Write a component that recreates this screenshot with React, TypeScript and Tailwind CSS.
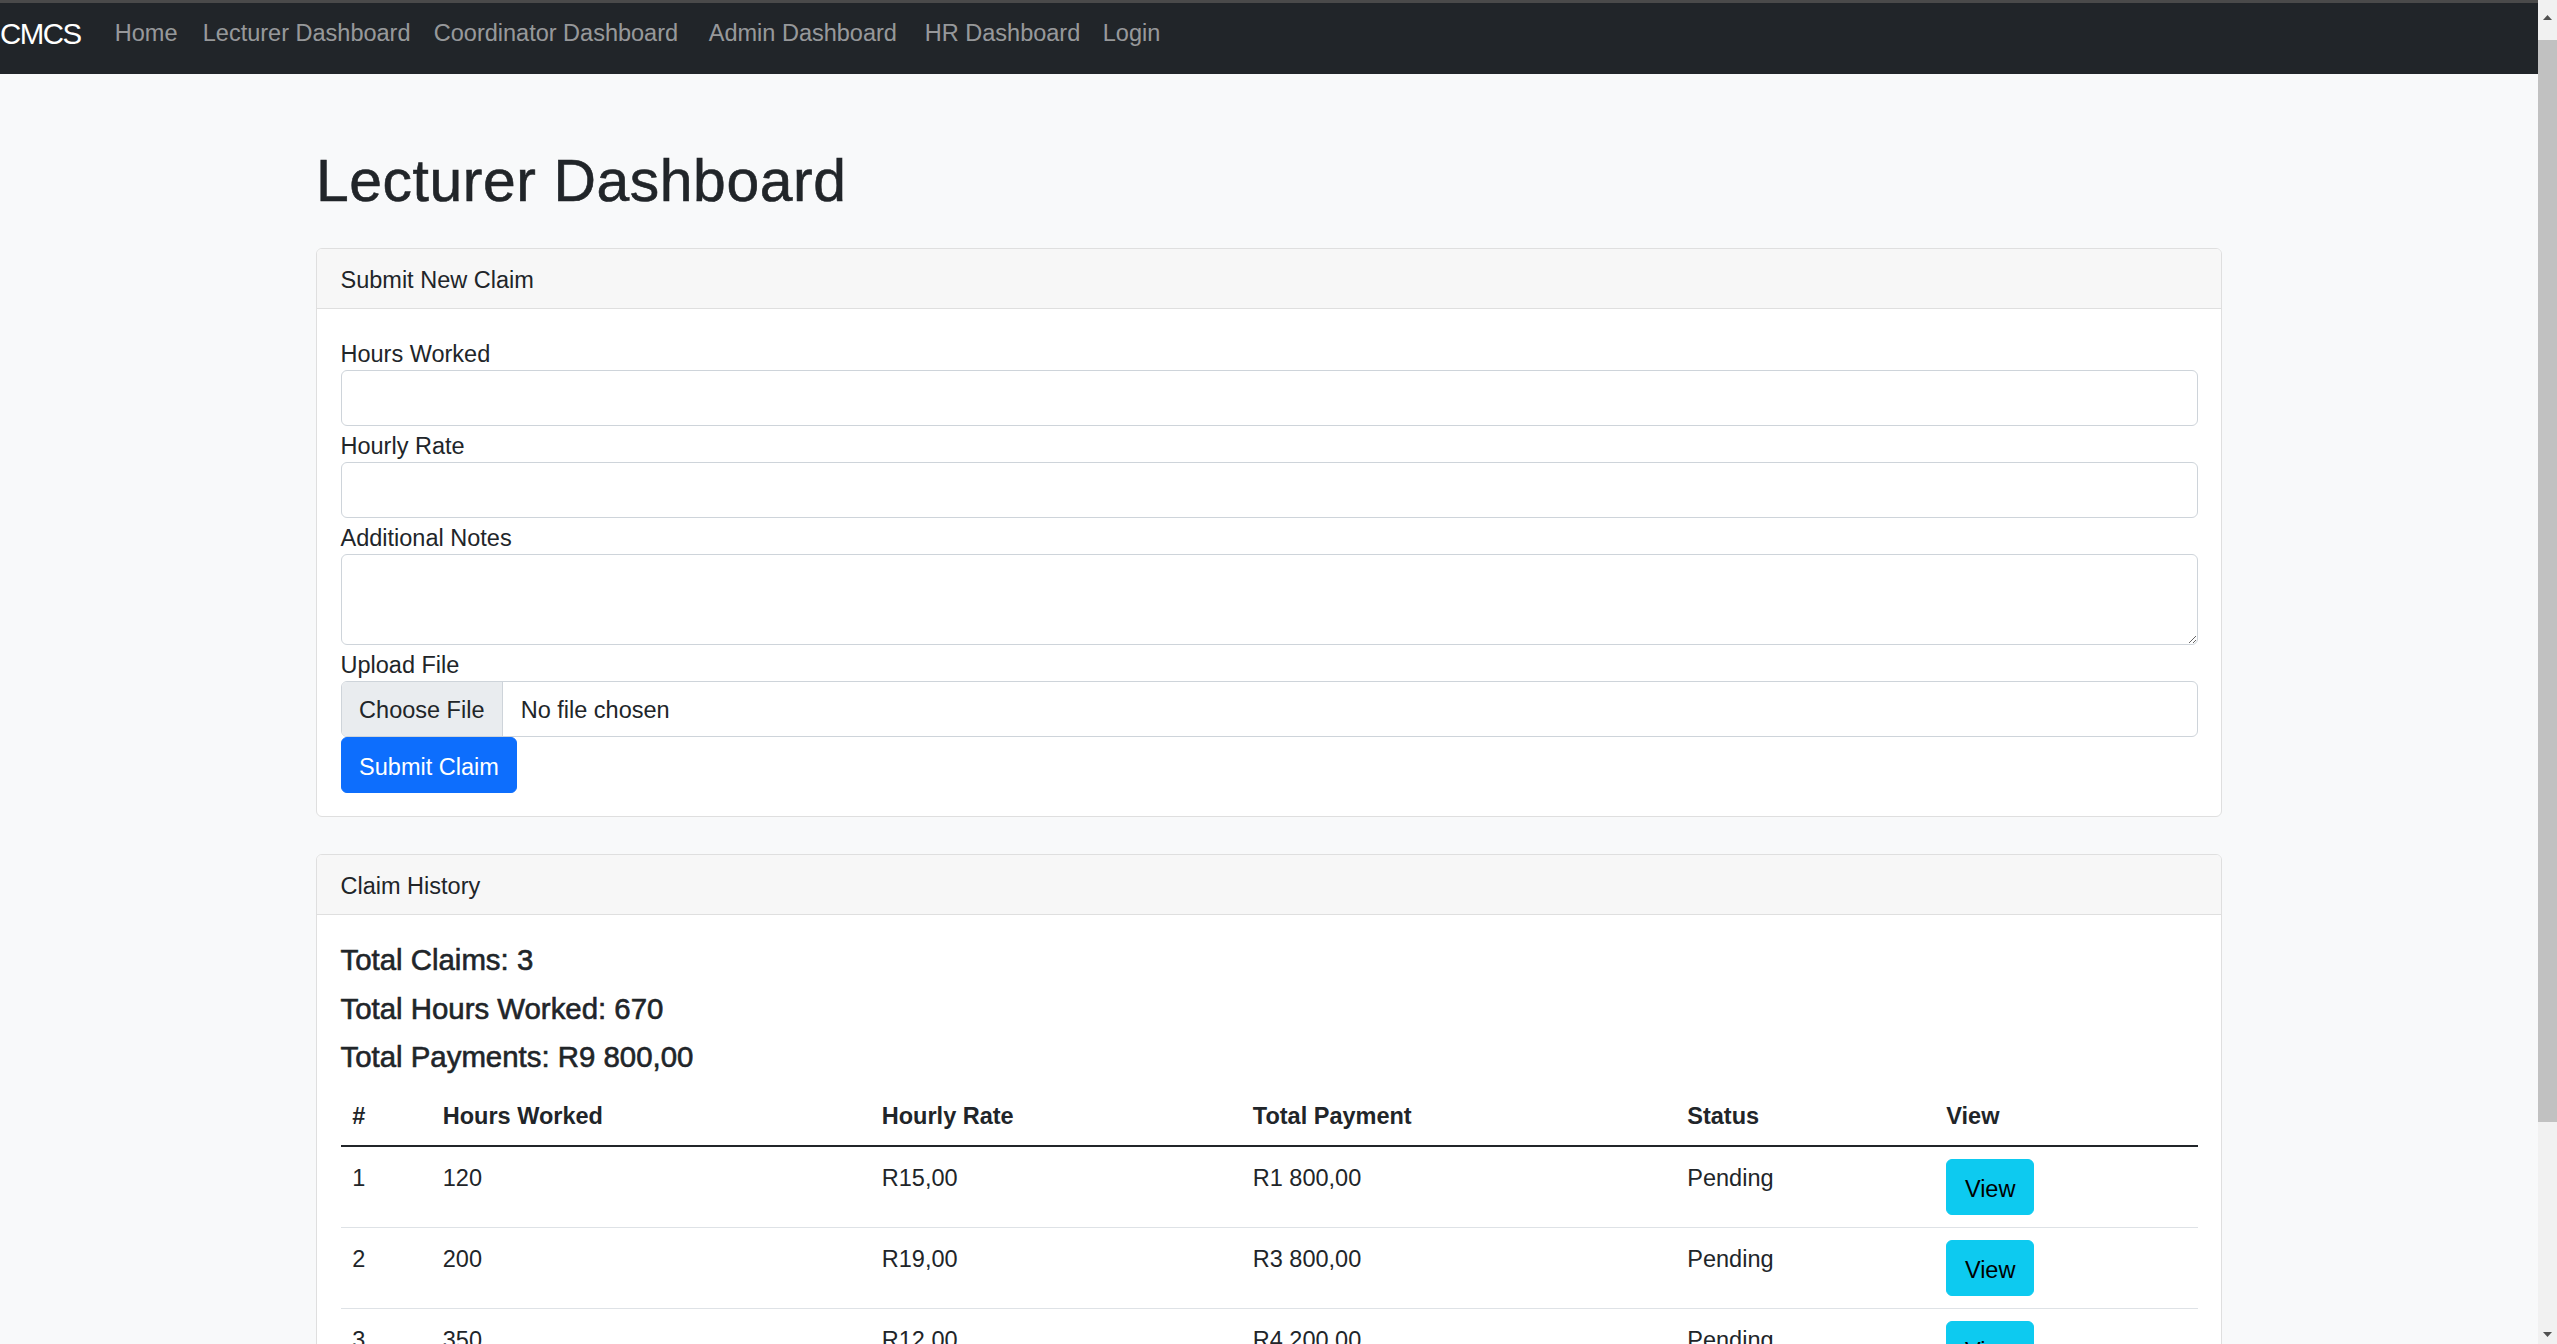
import React from "react";

const navLinks = [
  { label: "Home", width: "w-[88px]" },
  { label: "Lecturer Dashboard", width: "w-[231px]" },
  { label: "Coordinator Dashboard", width: "w-[275px]" },
  { label: "Admin Dashboard", width: "w-[216px]" },
  { label: "HR Dashboard", width: "w-[178px]" },
  { label: "Login", width: "" },
];

const claims = [
  { id: 1, hours: 120, rate: "R15,00", total: "R1 800,00", status: "Pending" },
  { id: 2, hours: 200, rate: "R19,00", total: "R3 800,00", status: "Pending" },
  { id: 3, hours: 350, rate: "R12,00", total: "R4 200,00", status: "Pending" },
];

function Label({ children }: { children: React.ReactNode }) {
  return <label className="block pt-[4px] leading-[32px]">{children}</label>;
}

function Card({ title, children, bodyClass }: { title: string; children: React.ReactNode; bodyClass: string }) {
  return (
    <div className="rounded-[6px] border border-[#dfdfdf] bg-white">
      <div className="rounded-t-[5px] border-b border-[#dfdfdf] bg-[#f7f7f7] px-[23.5px] pt-[14px] pb-[9.7px] leading-[35.3px]">
        {title}
      </div>
      <div className={bodyClass}>{children}</div>
    </div>
  );
}

function Scrollbar() {
  return (
    <div className="flex w-[19px] shrink-0 flex-col bg-[#f1f1f1]">
      <div className="flex h-[34px] items-center justify-center">
        <svg width="9" height="5" viewBox="0 0 9 5">
          <path d="M4.5 0 L9 5 L0 5 Z" fill="#505050" />
        </svg>
      </div>
      <div className="mt-[6px] h-[1082px] bg-[#c1c1c1]" />
      <div className="flex-1" />
      <div className="flex h-[20px] items-center justify-center">
        <svg width="9" height="5" viewBox="0 0 9 5">
          <path d="M0 0 L9 0 L4.5 5 Z" fill="#505050" />
        </svg>
      </div>
    </div>
  );
}

export default function App() {
  return (
    <div className="flex h-[1344px] w-full overflow-hidden bg-[#f8f9fa] font-['Liberation_Sans',Arial,sans-serif] text-[23.5px] leading-[35.3px] text-[#212529]">
      <div className="flex min-w-0 flex-1 flex-col">
        <div className="h-[3px] shrink-0 bg-[#4a4a4a]" />
        <nav className="flex h-[71px] shrink-0 items-center whitespace-nowrap bg-[#212529] pb-[9px]">
          <a href="#" className="w-[103px] shrink-0 text-[29.4px] leading-[44px] tracking-[-1.5px] text-white">
            CMCS
          </a>
          {navLinks.map((link) => (
            <a key={link.label} href="#" className={`${link.width} shrink-0 whitespace-nowrap px-[11.8px] text-[rgba(255,255,255,0.55)]`}>
              {link.label}
            </a>
          ))}
        </nav>

        <main className="mx-auto w-[1906px] shrink-0 pt-[72px]">
          <h1 className="mb-[31.4px] text-[58.8px] leading-[70.5px] font-medium tracking-[0.6px] [-webkit-text-stroke:0.6px_#212529]">
            Lecturer Dashboard
          </h1>

          <Card title="Submit New Claim" bodyClass="px-[23.5px] pt-[25px] pb-[23.5px]">
            <form>
              <Label>Hours Worked</Label>
              <input type="text" className="block h-[56px] w-full rounded-[6px] border border-[#ced4da] bg-white px-[17.6px] outline-none" />
              <Label>Hourly Rate</Label>
              <input type="text" className="block h-[56px] w-full rounded-[6px] border border-[#ced4da] bg-white px-[17.6px] outline-none" />
              <Label>Additional Notes</Label>
              <textarea className="block h-[91px] w-full resize-y rounded-[6px] border border-[#ced4da] bg-white px-[17.6px] outline-none" />
              <Label>Upload File</Label>
              <div className="flex h-[56px] w-full overflow-hidden rounded-[6px] border border-[#ced4da] bg-white">
                <div className="flex items-center border-r border-[#ced4da] bg-[#e9ecef] px-[17.6px] pt-[3px]">Choose File</div>
                <div className="flex items-center pl-[17.6px] pt-[3px]">No file chosen</div>
              </div>
              <button
                type="button"
                className="flex h-[56px] items-center rounded-[6px] border border-[#0d6efd] bg-[#0d6efd] px-[17.6px] pt-[5px] text-white"
              >
                Submit Claim
              </button>
            </form>
          </Card>

          <div className="mt-[37px]">
            <Card title="Claim History" bodyClass="px-[23.5px] pt-[27px] pb-[23.5px]">
              <h5 className="mb-[12.3px] text-[29.4px] leading-[36px] font-medium [-webkit-text-stroke:0.6px_#212529]">Total Claims: 3</h5>
              <h5 className="mb-[12.3px] text-[29.4px] leading-[36px] font-medium [-webkit-text-stroke:0.6px_#212529]">Total Hours Worked: 670</h5>
              <h5 className="mb-[12.3px] text-[29.4px] leading-[36px] font-medium [-webkit-text-stroke:0.6px_#212529]">Total Payments: R9 800,00</h5>

              <table className="w-full table-fixed border-separate border-spacing-0">
                <thead>
                  <tr>
                    <th className="w-[90.5px] border-b-2 border-[#212529] px-[11.8px] pt-[11.8px] pb-[10.4px] text-left align-bottom font-bold leading-[35.3px]">#</th>
                    <th className="w-[439px] border-b-2 border-[#212529] px-[11.8px] pt-[11.8px] pb-[10.4px] text-left align-bottom font-bold leading-[35.3px]">Hours Worked</th>
                    <th className="w-[371px] border-b-2 border-[#212529] px-[11.8px] pt-[11.8px] pb-[10.4px] text-left align-bottom font-bold leading-[35.3px]">Hourly Rate</th>
                    <th className="w-[434.5px] border-b-2 border-[#212529] px-[11.8px] pt-[11.8px] pb-[10.4px] text-left align-bottom font-bold leading-[35.3px]">Total Payment</th>
                    <th className="w-[259px] border-b-2 border-[#212529] px-[11.8px] pt-[11.8px] pb-[10.4px] text-left align-bottom font-bold leading-[35.3px]">Status</th>
                    <th className="border-b-2 border-[#212529] px-[11.8px] pt-[11.8px] pb-[10.4px] text-left align-bottom font-bold leading-[35.3px]">View</th>
                  </tr>
                </thead>
                <tbody>
                  {claims.map((c) => (
                    <tr key={c.id}>
                      <td className="border-b border-[#dee2e6] px-[11.8px] py-[12px] align-top leading-[38px]">{c.id}</td>
                      <td className="border-b border-[#dee2e6] px-[11.8px] py-[12px] align-top leading-[38px]">{c.hours}</td>
                      <td className="border-b border-[#dee2e6] px-[11.8px] py-[12px] align-top leading-[38px]">{c.rate}</td>
                      <td className="border-b border-[#dee2e6] px-[11.8px] py-[12px] align-top leading-[38px]">{c.total}</td>
                      <td className="border-b border-[#dee2e6] px-[11.8px] py-[12px] align-top leading-[38px]">{c.status}</td>
                      <td className="border-b border-[#dee2e6] px-[11.8px] py-[12px] align-top">
                        <button
                          type="button"
                          className="flex h-[56px] items-center rounded-[6px] border border-[#0dcaf0] bg-[#0dcaf0] px-[17.6px] pt-[5px] text-black"
                        >
                          View
                        </button>
                      </td>
                    </tr>
                  ))}
                </tbody>
              </table>
            </Card>
          </div>
        </main>
      </div>
      <Scrollbar />
    </div>
  );
}
